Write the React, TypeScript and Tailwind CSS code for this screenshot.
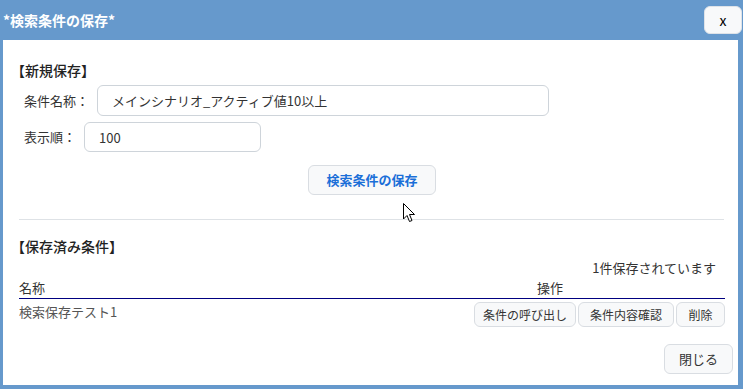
export default function App() {
  const font = { fontFamily: '"Noto Sans CJK JP", "Noto Sans", sans-serif' };

  return (
    <div
      className="relative flex h-[389px] w-[743px] flex-col bg-[#6699cc] pb-[4px] pl-[3px] pr-[5px] text-[13px] text-[#333]"
      style={font}
    >
      {/* title bar */}
      <div className="flex h-[40px] items-center justify-between">
        <div className="text-[14px] font-bold text-white">*検索条件の保存*</div>
        <button className="-mr-[4px] flex h-[28px] w-[38px] items-center justify-center rounded-md border border-[#dfe3e8] bg-[#f8f9fa] text-[14px] text-black">
          x
        </button>
      </div>

      {/* body */}
      <div className="flex flex-1 flex-col bg-white pl-[16px] pr-[5px]">
        <div className="-ml-[8px] mt-[20px] h-[20px] text-[14px] font-medium leading-[20px] text-[#222]">
          【新規保存】
        </div>

        <div className="mt-[5px] flex items-center pl-[5px]">
          <span className="w-[73px]">条件名称：</span>
          <input
            className="h-[31px] w-[452px] rounded-md border border-[#ced4da] px-[14px] text-[13px] text-[#333] outline-none"
            defaultValue="メインシナリオ_アクティブ値10以上"
            style={font}
          />
        </div>

        <div className="mt-[6px] flex items-center pl-[5px]">
          <span className="w-[60px]">表示順：</span>
          <input
            className="h-[30px] w-[177px] rounded-md border border-[#ced4da] px-[14px] text-[13px] text-[#333] outline-none"
            defaultValue="100"
            style={font}
          />
        </div>

        <div className="mr-[8px] mt-[13px] flex justify-center">
          <button className="h-[30px] w-[128px] rounded-md border border-[#d9dde2] bg-[#f8f9fa] text-[13px] font-bold text-[#1b6fd8]">
            検索条件の保存
          </button>
        </div>

        <div className="mr-[9px] mt-[24px] h-px bg-[#dee2e6]" />

        <div className="-ml-[8px] mt-[16px] h-[20px] text-[14px] font-medium leading-[20px] text-[#222]">
          【保存済み条件】
        </div>

        <div className="mr-[17px] mt-[2px] h-[20px] text-right leading-[20px]">
          1件保存されています
        </div>

        <div className="mr-[8px] flex h-[21px] items-center border-b border-[#000080] leading-[20px]">
          <span className="flex-1">名称</span>
          <span className="mr-[162px]">操作</span>
        </div>

        <div className="mr-[8px] flex items-start pt-[3px]">
          <span className="flex-1 leading-[20px] text-[#555]">検索保存テスト1</span>
          <div className="flex gap-[2px]">
            <button className="h-[25px] w-[102px] rounded-md border border-[#d9dde2] bg-[#f8f9fa] text-[12px] text-[#333]">
              条件の呼び出し
            </button>
            <button className="h-[25px] w-[96px] rounded-md border border-[#d9dde2] bg-[#f8f9fa] text-[12px] text-[#333]">
              条件内容確認
            </button>
            <button className="h-[25px] w-[49px] rounded-md border border-[#d9dde2] bg-[#f8f9fa] text-[12px] text-[#333]">
              削除
            </button>
          </div>
        </div>

        <div className="mt-[17px] flex justify-end">
          <button className="h-[30px] w-[69px] rounded-md border border-[#d9dde2] bg-[#f8f9fa] text-[13px] text-[#333]">
            閉じる
          </button>
        </div>
      </div>

      {/* mouse pointer */}
      <svg
        className="absolute left-[403px] top-[203px]"
        width="13"
        height="20"
        viewBox="0 0 13 20"
      >
        <path
          d="M0.5 0.5 L0.5 16 L4 12.5 L6.5 18.5 L9 17.5 L6.5 11.5 L11.5 11.5 Z"
          fill="white"
          stroke="black"
          strokeWidth="1"
          strokeLinejoin="round"
        />
      </svg>
    </div>
  );
}
